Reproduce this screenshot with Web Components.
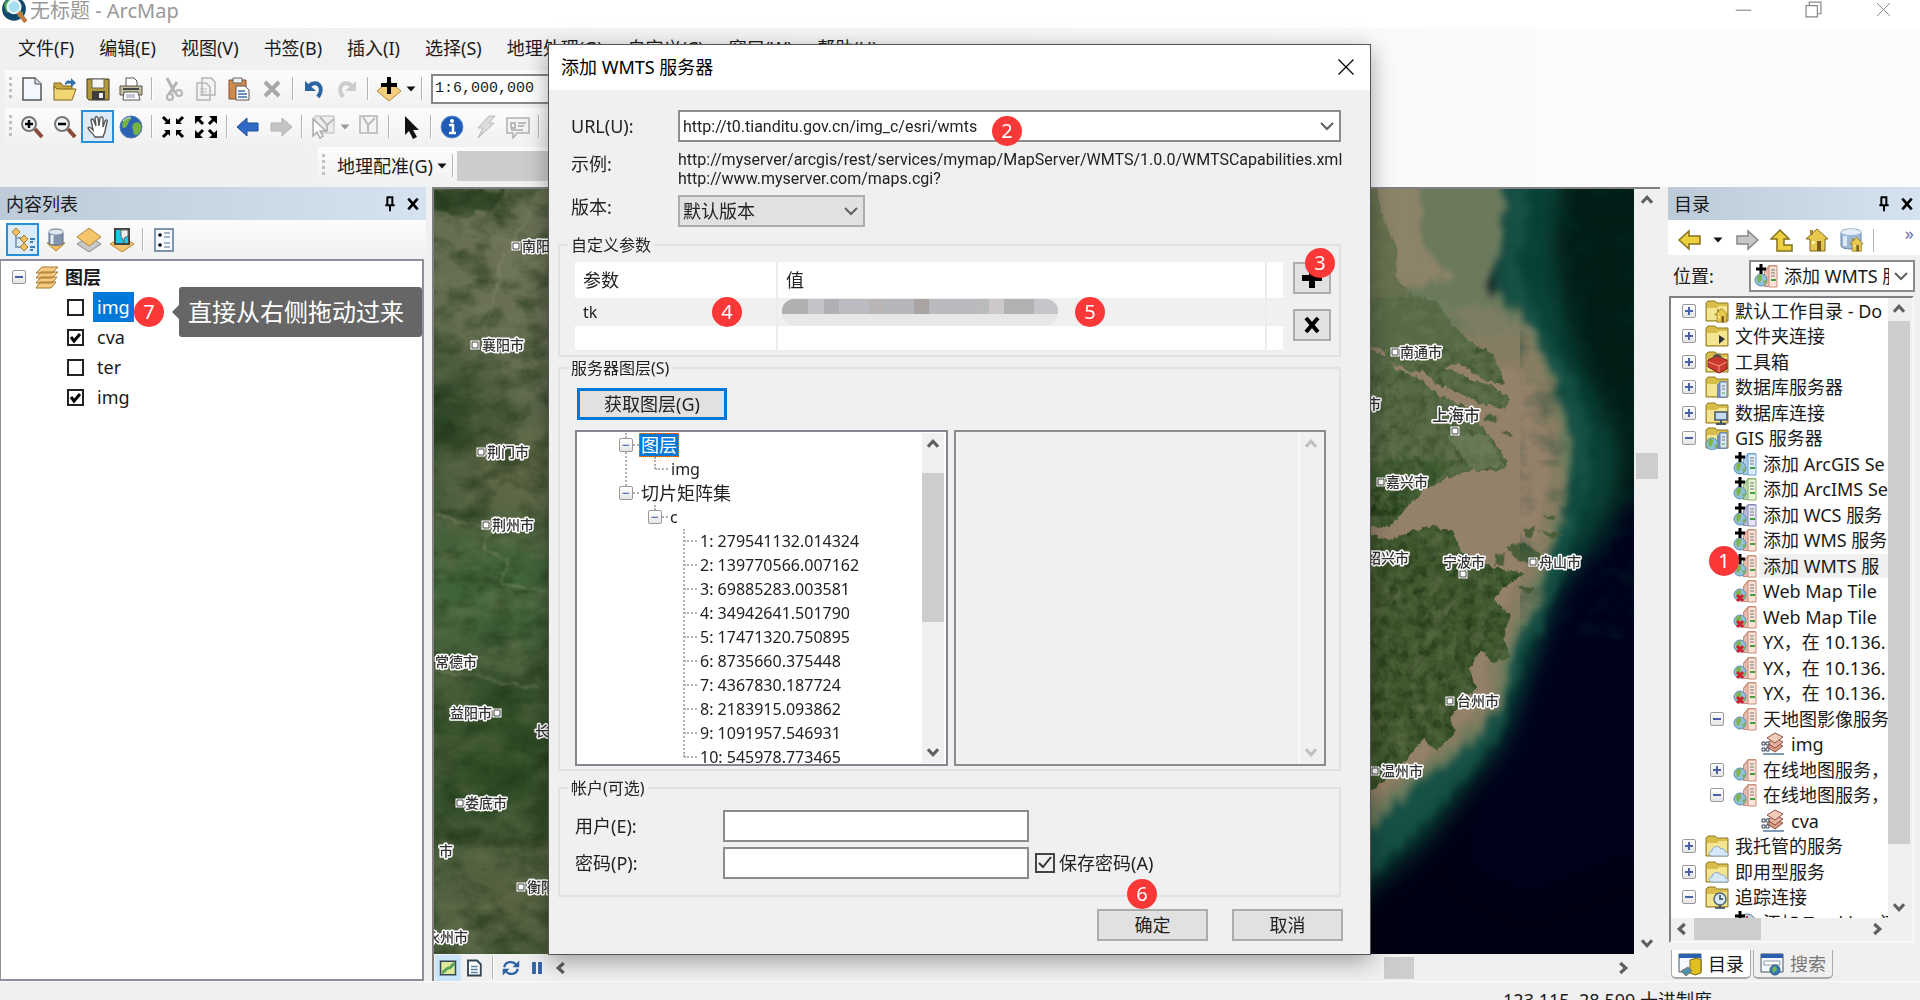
<!DOCTYPE html>
<html lang="zh-CN">
<head>
<meta charset="utf-8">
<title>无标题 - ArcMap</title>
<style>
  body {
    margin: 0;
    height: 100vh;
    overflow: hidden;
    font: 18px/24px "Noto Sans", "Noto Sans CJK SC", sans-serif;
    color: #1a1a1a;
    background: #f0f0f0;
  }
</style>
</head>
<body>
<arc-window></arc-window>

<template id="tool-bar-template">
  <style>
    :host {
      display: flex;
      align-items: center;
      box-sizing: border-box;
      height: 37px;
      background: linear-gradient(#fcfcfc, #f1f1f1);
    }
    .grip {
      flex: none;
      width: 3px;
      height: 23px;
      margin: 0 3px 0 4px;
      background: repeating-linear-gradient(#c0c0c0 0 3px, transparent 3px 6px);
    }
  </style>
  <span class="grip"></span>
  <slot></slot>
</template>

<template id="dock-panel-template">
  <style>
    :host {
      display: flex;
      flex-direction: column;
      min-width: 0;
      min-height: 0;
    }
    header {
      display: flex;
      align-items: center;
      height: 33px;
      padding: 0 2px 0 6px;
      background: linear-gradient(to right, #bdcbd9, #d5e3f1);
    }
    h2 {
      flex: 1;
      margin: 0;
      font: inherit;
    }
    button {
      display: flex;
      width: 23px;
      padding: 0;
      border: 0;
      background: none;
      justify-content: center;
    }
    arc-icon { --size: 16px; }
  </style>
  <header>
    <h2></h2>
    <button aria-label="自动隐藏"><arc-icon name="pin"></arc-icon></button>
    <button aria-label="关闭"><arc-icon name="cross"></arc-icon></button>
  </header>
  <slot></slot>
</template>

<template id="tree-row-template">
  <style>
    :host {
      display: flex;
      align-items: center;
      flex: none;
      white-space: nowrap;
    }
    .expander {
      box-sizing: border-box;
      flex: none;
      width: 14px;
      height: 14px;
      margin: 0 9px 0 11px;
      visibility: hidden;
      border: 1px solid #9a9a9a;
      border-radius: 2px;
      background:
        linear-gradient(#4a62a8, #4a62a8) center / 8px 2px no-repeat,
        linear-gradient(#fff, #e4e4e4);
    }
    :host([expand]) .expander { visibility: visible; }
    :host([expand="plus"]) .expander {
      background:
        linear-gradient(#4a62a8, #4a62a8) center / 8px 2px no-repeat,
        linear-gradient(#4a62a8, #4a62a8) center / 2px 8px no-repeat,
        linear-gradient(#fff, #e4e4e4);
    }
    arc-icon { flex: none; }
    .label { padding: 0 4px; margin-left: 2px; }
    :host([selected]) .label { background: #f0f0f0; flex: 1; }
  </style>
  <span class="expander"></span>
  <arc-icon></arc-icon>
  <span class="label"><slot></slot></span>
</template>

<template id="scroll-bar-template">
  <style>
    :host {
      display: flex;
      flex-direction: column;
      flex: none;
      width: 22px;
      background: #f0f0f0;
      color: #606060;
    }
    :host([horizontal]) {
      flex-direction: row;
      width: auto;
      height: 22px;
    }
    :host([disabled]) { color: #c0c0c0; }
    arc-icon { --size: 22px; flex: none; }
    .track { flex: 1; display: flex; flex-direction: column; min-width: 0; }
    :host([horizontal]) .track { flex-direction: row; }
    .before { flex: var(--before, 0) 0 0; }
    .thumb { flex: var(--thumb, 0) 0 0; background: #cdcdcd; }
    .after { flex: var(--after, 1) 0 0; }
  </style>
  <arc-icon class="start"></arc-icon>
  <div class="track">
    <div class="before"></div><div class="thumb"></div><div class="after"></div>
  </div>
  <arc-icon class="end"></arc-icon>
</template>

<template id="group-box-template">
  <style>
    :host { display: block; }
    fieldset {
      margin: 0;
      padding: 0;
      border: 2px solid #e2e2e2;
      min-width: 0;
    }
    legend {
      margin-left: 8px;
      padding: 0 3px;
      line-height: 22px;
    }
    .body { padding: var(--group-padding, 0); }
  </style>
  <fieldset>
    <legend></legend>
    <div class="body"><slot></slot></div>
  </fieldset>
</template>

<template id="step-badge-template">
  <style>
    :host {
      position: absolute;
      z-index: 5;
      width: 30px;
      height: 30px;
      border-radius: 50%;
      background: #fb3838;
      color: #fff;
      font-size: 20px;
      line-height: 29px;
      text-align: center;
    }
  </style>
  <slot></slot>
</template>

<template id="hint-bubble-template">
  <style>
    :host {
      position: absolute;
      z-index: 5;
      box-sizing: border-box;
      padding: 0 18px 0 9px;
      border-radius: 3px;
      background: #666;
      color: #fff;
      font-size: 24px;
      line-height: 50px;
      white-space: nowrap;
    }
    :host::before {
      content: "";
      position: absolute;
      left: -7px;
      top: 18px;
      border: 7px solid transparent;
      border-width: 7px 7px 7px 0;
      border-right-color: #666;
    }
  </style>
  <slot></slot>
</template>

<template id="map-view-template">
  <style>
    :host {
      display: block;
      position: relative;
      min-width: 0;
      min-height: 0;
      overflow: hidden;
      background: #00000f;
    }
    svg {
      position: absolute;
      right: 0;
      top: 0;
      width: 1200px;
      height: 766px;
    }
    text {
      font: 500 14px "Noto Sans CJK SC", sans-serif;
      fill: #333;
      stroke: #fff;
      stroke-width: 3px;
      stroke-linejoin: round;
      paint-order: stroke;
    }
    .halo { fill: #fff; stroke: #fff; stroke-width: 3px; }
    .city { fill: #fff; stroke: #444; stroke-width: 1px; }
  </style>
  <svg viewBox="0 0 1200 766" role="img" aria-label="影像地图">
    <defs>
      <filter id="soft" x="-20%" y="-20%" width="140%" height="140%" color-interpolation-filters="sRGB"><feGaussianBlur stdDeviation="30"/></filter>
      <filter id="soft2" x="-20%" y="-20%" width="140%" height="140%" color-interpolation-filters="sRGB">
        <feTurbulence type="fractalNoise" baseFrequency=".03" numOctaves="4" seed="4" result="n"/>
        <feDisplacementMap in="SourceGraphic" in2="n" scale="50" xChannelSelector="R" yChannelSelector="G"/>
        <feGaussianBlur stdDeviation="9"/>
      </filter>
      <filter id="mud" x="-20%" y="-20%" width="140%" height="140%" color-interpolation-filters="sRGB">
        <feTurbulence type="fractalNoise" baseFrequency=".03" numOctaves="4" seed="9" result="n"/>
        <feDisplacementMap in="SourceGraphic" in2="n" scale="40" xChannelSelector="R" yChannelSelector="G"/>
        <feGaussianBlur stdDeviation="6"/>
      </filter>
      <filter id="shore" x="-5%" y="-5%" width="110%" height="110%" color-interpolation-filters="sRGB">
        <feTurbulence type="fractalNoise" baseFrequency=".06" numOctaves="3" seed="8" result="n"/>
        <feDisplacementMap in="SourceGraphic" in2="n" scale="14" xChannelSelector="R" yChannelSelector="G"/>
        <feGaussianBlur stdDeviation="1"/>
      </filter>
      <filter id="ridges" x="0" y="0" width="100%" height="100%" color-interpolation-filters="sRGB">
        <feTurbulence type="fractalNoise" baseFrequency=".035 .05" numOctaves="5" seed="12"/>
        <feColorMatrix values="0 0 0 0 .11  0 0 0 0 .2  0 0 0 0 .08  2.2 0 0 0 -.9"/>
      </filter>
      <filter id="fields" x="0" y="0" width="100%" height="100%" color-interpolation-filters="sRGB">
        <feTurbulence type="fractalNoise" baseFrequency=".02 .035" numOctaves="5" seed="31"/>
        <feColorMatrix values="0 0 0 0 .48  0 0 0 0 .52  0 0 0 0 .38  0 2 0 0 -.85"/>
      </filter>
      <filter id="swell" x="0" y="0" width="100%" height="100%" color-interpolation-filters="sRGB">
        <feTurbulence type="fractalNoise" baseFrequency=".01 .02" numOctaves="4" seed="5"/>
        <feColorMatrix values="0 0 0 0 0  0 0 0 0 .22  0 0 0 0 .18  0 0 2 0 -.9"/>
      </filter>
      <clipPath id="land"><path d="M30 0 L50 20 70 80 110 130 105 190 160 225 235 240 275 285 350 325 400 340 435 400 380 395 300 360 200 375 150 375 100 360 60 330 30 325Z M190 375 L240 362 330 390 400 405 450 430 430 450 360 438 290 415 230 400Z M30 335 L80 345 110 372 170 385 230 420 300 440 350 470 400 510 440 550 430 570 340 570 260 585 190 610 140 640 90 680 30 680Z M30 695 L90 705 150 690 220 678 280 690 300 725 350 745 400 760 440 765 495 770 430 800 400 825 450 850 430 900 450 935 400 945 360 920 330 960 350 1000 300 1020 270 1060 290 1080 230 1120 190 1095 120 1150 30 1200Z"/></clipPath>
    </defs>

    <!-- inland plains and hills -->
    <rect width="960" height="766" fill="#475c3c"/>
    <g filter="url(#soft)">
      <path d="M-20 -20h180v240H60L-20 150Z" fill="#6a7055"/>
      <path d="M40 250h90v70H20Z" fill="#706f50"/>
      <path d="M-40 160l85 20 10 90H-40Z" fill="#1f3b1c"/>
      <path d="M-20 490h170v150H-20Z" fill="#2f4c26"/>
      <path d="M-20 350h170v100H-20Z" fill="#40653a"/>
      <path d="M10 660h130v100H10Z" fill="#586242"/>
    </g>
    <path d="M0 0h70l-10 20-30 8-30-6z" fill="#20391a" opacity=".7" filter="url(#shore)"/>
    <rect width="420" height="766" filter="url(#ridges)" opacity=".65"/>
    <rect width="420" height="766" filter="url(#fields)" opacity=".45"/>
    <path d="M93 20l-6 22-20 30-4 30-11 38 4 20M0 328l25 4 30 10-6 22 22 6v28l42 2M0 480l30 6 25 4 50 8" fill="none" stroke="#8c8f70" stroke-opacity=".6" stroke-width="1.500" filter="url(#shore)"/>

    <!-- sea and coast, drawn on a finer sheet -->
    <g transform="translate(926 -9) scale(.3333 .51)">
      <rect x="30" width="800" height="1540" fill="#000014"/>
      <g filter="url(#soft)">
        <path d="M400 -60H900V560L720 780 560 900 400 1000Z" fill="#021c16"/>
        <path d="M430 -60H620L580 140 640 330 780 520 760 640 650 760 560 900 480 1020 430 1100 200 1290 -30 1420V1100L400 900Z" fill="#0a4338"/>
        <path d="M600 800L900 560V1300L500 1400 300 1340Z" fill="#00021c"/>
      </g>
      <g filter="url(#soft2)">
        <path d="M400 -40L530 -20 470 170 560 300 650 400 680 480 690 600 620 740 590 800 540 870 460 980 430 1080 300 1190 160 1280 -20 1400V1200L400 900V0Z" fill="#1b5549" opacity=".75"/>
        <path d="M-20 -40H430L430 120 380 210 520 290 590 400 635 520 620 640 560 760 530 850 470 900 430 1020 360 1090 240 1150 130 1210 -20 1300V900L-20 100Z" fill="#6b7a5d"/>
        <path d="M20 330L240 300 500 300 590 420 610 640 540 760 490 840 430 920 400 1040 240 1130 20 1230Z" fill="#877d62"/>
      </g>
      <g filter="url(#mud)">
        <path d="M20 -40L180 -40 190 130 280 190 130 220Z" fill="#8d8369"/>
        <path d="M30 320L240 330 460 370 540 430 570 520 560 660 470 790 400 900 370 1020 220 1120 20 1220V1180L280 1050 360 900 400 780 290 740 200 690 20 720V640L300 560Z" fill="#94816a"/>
        <path d="M250 245L420 255 540 300 420 320 330 300Z" fill="#837f66" opacity=".7"/>
      </g>
      <g filter="url(#shore)">
        <g clip-path="url(#land)">
          <rect x="30" width="500" height="660" fill="#566a46"/>
          <rect x="30" y="640" width="500" height="620" fill="#40592f"/>
          <path d="M30 0h120v230H30Z" fill="#66704e"/>
          <path d="M30 550h260l-200 130H30Z" fill="#415c32"/>
          <rect x="30" y="600" width="500" height="660" filter="url(#ridges)" opacity=".8"/>
          <rect x="30" y="330" width="500" height="330" filter="url(#ridges)" opacity=".45"/>
          <rect x="30" y="0" width="500" height="1260" filter="url(#fields)" opacity=".45"/>
          <path d="M260 500L380 500 430 560 340 570Z" fill="#788566" opacity=".5"/>
        </g>
        <path d="M440 720l50-10 55 25-10 20-60-8ZM490 685l35-5-5 18-25 2ZM550 655l40 5-20 8ZM530 690l80 4-30 8ZM375 460l40 5-5 10-40-5ZM420 492l40 5-10 8ZM410 735l25-5-4 25-25 2ZM470 795l50 5-10 14Z" fill="#4c5f3c"/>
      </g>
      <rect x="480" width="350" height="900" filter="url(#swell)" opacity=".4"/>
    </g>

    <path class="halo" d="M79 54h6v6h-6zM38 153h6v6h-6zM44 260h6v6h-6zM49 333h6v6h-6zM60 521h6v6h-6zM23 611h6v6h-6zM84 695h6v6h-6zM958 160h6v6h-6zM944 290h6v6h-6zM1096 370h6v6h-6zM1013 509h6v6h-6zM938 579h6v6h-6zM1018 239h6v6h-6zM1026 382h6v6h-6z"/>
    <path class="city" d="M79 54h6v6h-6zM38 153h6v6h-6zM44 260h6v6h-6zM49 333h6v6h-6zM60 521h6v6h-6zM23 611h6v6h-6zM84 695h6v6h-6zM958 160h6v6h-6zM944 290h6v6h-6zM1096 370h6v6h-6zM1013 509h6v6h-6zM938 579h6v6h-6zM1018 239h6v6h-6zM1026 382h6v6h-6z"/>
    <text x="88" y="62">南阳市</text>
    <text x="48" y="161">襄阳市</text>
    <text x="53" y="268">荆门市</text>
    <text x="58" y="341">荆州市</text>
    <text x="1" y="478">常德市</text>
    <text x="16" y="529">益阳市</text>
    <text x="101" y="547">长沙市</text>
    <text x="31" y="619">娄底市</text>
    <text x="5" y="667">市</text>
    <text x="93" y="703">衡阳市</text>
    <text x="-8" y="753">永州市</text>
    <text x="966" y="168">南通市</text>
    <text x="933" y="220">市</text>
    <text x="998" y="232" style="font-size: 16px">上海市</text>
    <text x="952" y="298">嘉兴市</text>
    <text x="933" y="374">绍兴市</text>
    <text x="1009" y="378">宁波市</text>
    <text x="1105" y="378">舟山市</text>
    <text x="1023" y="517">台州市</text>
    <text x="947" y="587">温州市</text>
  </svg>
</template>

<template id="wmts-dialog-template">
  <style>
    :host {
      display: flex;
      flex-direction: column;
      box-sizing: border-box;
      width: 823px;
      border: 1px solid #555;
      background: #f0f0f0;
      box-shadow: 0 6px 22px rgba(0, 0, 0, .35);
      color: #222;
      font-size: 16px;
    }
    header {
      display: flex;
      align-items: center;
      justify-content: space-between;
      box-sizing: border-box;
      height: 45px;
      padding: 0 14px 2px 12px;
      background: #fff;
      color: #000;
      font-size: 18px;
      --size: 20px;
    }
    button {
      font: inherit;
      font-size: 18px;
      color: inherit;
      box-sizing: border-box;
      height: 32px;
      padding: 0;
      border: 2px solid #adadad;
      background: #e1e1e1;
    }
    header button {
      display: flex;
      align-items: center;
      border: 0;
      background: none;
    }
    label, .caption, .zh { font-size: 18px; }
    main { padding: 20px 29px 0 9px; }
    .form {
      display: grid;
      grid-template-columns: 107px minmax(0, 1fr);
      padding: 0 0 0 13px;
      align-items: center;
    }
    .field { display: flex; position: relative; }
    input, select {
      box-sizing: border-box;
      font: inherit;
      color: inherit;
      height: 32px;
      border: 2px solid #8c8c8c;
      border-radius: 0;
      background: #fff;
      appearance: none;
    }
    input { padding: 0 3px; min-width: 0; }
    .url { width: 100%; }
    .url, .sample { font-family: Roboto, "Noto Sans", sans-serif; }
    select {
      width: 187px;
      padding: 0 3px;
      font-size: 18px;
      border-color: #adadad;
      background: #e1e1e1;
    }
    .field arc-icon { --size: 24px; position: absolute; right: 2px; top: 4px; color: #606060; pointer-events: none; }
    .version { width: 187px; }
    .sample { line-height: 19px; padding: 8px 0 7px; white-space: nowrap; }
    .caption { align-self: start; padding-top: 10px; }
    label { line-height: 24px; }
    .raised { align-self: start; }
    group-box { --group-padding: 6px 8px 4px 15px; margin-top: 7px; }
    .params { display: flex; gap: 10px; }
    table {
      flex: 1;
      height: 89px;
      border-collapse: collapse;
      background: #fff;
      font-size: 18px;
      table-layout: fixed;
      line-height: 20px;
    }
    th { font-weight: normal; text-align: left; }
    th, td { padding: 0 8px; border: 1px solid #ececec; border-width: 0 0 1px 2px; }
    th:first-child, td:first-child { border-left: 0; }
    thead tr { height: 36px; }
    tbody tr { height: 25px; font-size: 16px; }
    tbody tr:first-child { background: #f0f0f0; }
    .mask {
      display: block;
      width: 276px;
      height: 26px;
      margin-left: -4px;
      border-radius: 12px;
      background:
        linear-gradient(to right, #b2b0ae 0 26px, #c3c3c8 26px 42px, #b0b0b4 42px 57px, #bcbbc2 57px 87px, #bab5b5 87px 102px, #b5b6ba 102px 132px, #a9a4a2 132px 147px, #b9b9be 147px 192px, #babbbc 192px 207px, #cdc8c9 207px 222px, #b1b1b4 222px 252px, #c5c6ca 252px) top / 100% 15px no-repeat,
        #e7e7e8;
    }
    .tools { display: flex; flex-direction: column; gap: 15px; }
    .tools button { width: 38px; display: flex; align-items: center; justify-content: center; }
    .fetch { width: 150px; margin: 9px 0 10px 2px; border: 3px solid #0078d7; display: block; }
    .layers { --group-padding: 0 13px 3px 15px; margin-top: 0; }
    .lists { display: grid; grid-template-columns: 1fr 1fr; gap: 6px; height: 336px; }
    .list {
      display: flex;
      min-width: 0;
      min-height: 0;
      border: 2px solid #828790;
      padding: 1px 2px 1px 1px;
      background: #fff;
      overflow: hidden;
    }
    .list.empty { background: #f0f0f0; justify-content: flex-end; border-color: #8c8c8c; }
    .list.empty scroll-bar { border-left: 2px solid #fafafa; }
    ul { list-style: none; margin: 0; padding: 0; position: relative; }
    .list > ul { flex: 1; min-height: 0; padding-left: 48px; }
    li { line-height: 24px; position: relative; white-space: nowrap; }
    li > ul { margin-left: 29px; }
    ul::before {
      content: "";
      position: absolute;
      left: -1px;
      top: 0;
      bottom: 12px;
      border-left: 2px dotted #b0b0b0;
    }
    .list > ul::before { left: 47px; bottom: auto; height: 60px; }
    .matrix::before { bottom: auto; height: 12px; }
    .node {
      display: flex;
      align-items: center;
      height: 24px;
    }
    .node::before {
      content: "−";
      box-sizing: border-box;
      width: 14px;
      height: 14px;
      margin-left: -7px;
      border: 1px solid #999;
      border-radius: 2px;
      background: linear-gradient(#fff, #e6e6e6);
      color: #3a5ca8;
      font-size: 14px;
      line-height: 11px;
      text-align: center;
      z-index: 1;
    }
    .node::after { content: ""; order: 1; width: 6px; border-top: 2px dotted #b0b0b0; }
    .node span { order: 2; padding: 0 2px; line-height: 24px; }
    .leaf { display: flex; align-items: center; }
    .leaf::before { content: ""; width: 13px; margin-right: 3px; border-top: 2px dotted #b0b0b0; }
    .selected { background: #0078d7; color: #fff; outline: 1px dotted #e08030; outline-offset: -1px; }
    .account { margin-top: 6px; --group-padding: 11px 0 16px 15px; }
    .login { display: grid; grid-template-columns: 148px 306px auto; row-gap: 5px; justify-content: start; align-items: center; }
    .save { display: flex; align-items: center; gap: 4px; padding-left: 6px; }
    .save input {
      width: 20px;
      height: 20px;
      margin: 0;
      padding: 0;
      border: 2px solid #444;
    }
    .save input:checked {
      background: url('data:image/svg+xml,<svg xmlns="http://www.w3.org/2000/svg" viewBox="0 0 16 16"><path d="M2 8l4 4 8-10" fill="none" stroke="%23333" stroke-width="2"/></svg>');
    }
    footer { display: flex; justify-content: flex-end; gap: 24px; padding: 12px 27px 13px; }
    footer button { width: 111px; }
    .b2 { left: 314px; top: 6px; }
    .b3 { left: 12px; top: -14px; }
    .slot { position: relative; }
    .b4 { right: 26px; top: -5px; }
    .b5 { left: 289px; top: -2px; }
    .b6 { left: 30px; top: -30px; }
  </style>
  <header>
    <span>添加 WMTS 服务器</span>
    <button aria-label="关闭"><arc-icon name="thin-cross"></arc-icon></button>
  </header>
  <main>
    <div class="form">
      <label for="url">URL(U):</label>
      <div class="field">
        <input id="url" class="url" value="http://t0.tianditu.gov.cn/img_c/esri/wmts">
        <arc-icon name="chevron-down"></arc-icon>
        <step-badge class="b2">2</step-badge>
      </div>
      <span class="caption">示例:</span>
      <div class="sample">http://myserver/arcgis/rest/services/mymap/MapServer/WMTS/1.0.0/WMTSCapabilities.xml<br>http://www.myserver.com/maps.cgi?</div>
      <label for="version" class="raised">版本:</label>
      <div class="field version">
        <select id="version"><option>默认版本</option></select>
        <arc-icon name="chevron-down"></arc-icon>
      </div>
    </div>

    <group-box legend="自定义参数" class="custom">
      <div class="params">
        <table>
          <colgroup><col style="width: 202px"><col><col style="width: 14px"></colgroup>
          <thead><tr><th>参数</th><th>值</th><th></th></tr></thead>
          <tbody>
            <tr><td><div class="slot">tk<step-badge class="b4">4</step-badge></div></td><td><div class="slot"><span class="mask"></span><step-badge class="b5">5</step-badge></div></td><td></td></tr>
            <tr><td></td><td></td><td></td></tr>
          </tbody>
        </table>
        <div class="tools">
          <div class="slot"><button aria-label="添加参数"><arc-icon name="plus"></arc-icon></button><step-badge class="b3">3</step-badge></div>
          <button aria-label="删除参数"><arc-icon name="remove-black"></arc-icon></button>
        </div>
      </div>
    </group-box>

    <group-box legend="服务器图层(S)" class="layers">
      <button class="fetch">获取图层(G)</button>
      <div class="lists">
        <div class="list">
          <ul>
            <li>
              <div class="node"><span class="zh selected">图层</span></div>
              <ul><li class="leaf">img</li></ul>
            </li>
            <li>
              <div class="node"><span class="zh">切片矩阵集</span></div>
              <ul class="matrix"><li>
                <div class="node"><span>c</span></div>
                <ul class="scales"></ul>
              </li></ul>
            </li>
          </ul>
          <scroll-bar style="--before: 18; --thumb: 150; --after: 120"></scroll-bar>
        </div>
        <div class="list empty"><scroll-bar disabled></scroll-bar></div>
      </div>
    </group-box>

    <group-box legend="帐户(可选)" class="account">
      <div class="login">
        <label for="user">用户(E):</label><input id="user"><span></span>
        <label for="pass">密码(P):</label><input id="pass" type="password">
        <label class="save"><input type="checkbox" checked>保存密码(A)</label>
      </div>
    </group-box>
  </main>
  <footer>
    <div class="slot"><button>确定</button><step-badge class="b6">6</step-badge></div>
    <button>取消</button>
  </footer>
</template>

<template id="arc-window-template">
  <style>
    :host {
      display: flex;
      flex-direction: column;
      height: 100%;
      position: relative;
    }
    button, input { font: inherit; color: inherit; }
    button { padding: 0; border: 0; background: none; }
    .title {
      display: flex;
      align-items: flex-start;
      height: 28px;
      padding-right: 2px;
      background: #fff;
      color: #999;
      font-size: 20px;
      line-height: 22px;
    }
    .title arc-icon { --size: 26px; margin: -3px 3px 0 1px; }
    .title h1 { flex: 1; margin: 0; font: inherit; }
    .title button { width: 70px; height: 20px; color: #888; }
    .title button arc-icon { --size: 17px; margin: 0; }
    .chrome { background: linear-gradient(to right, #f0f0f0 10%, #fbfbfb 80%); height: 159px; }
    nav { display: flex; gap: 25px; height: 40px; padding: 0 0 2px 18px; }
    .scale {
      box-sizing: border-box;
      width: 180px;
      height: 30px;
      margin-left: 5px;
      padding: 0 2px;
      border: 2px solid #888;
      background: #fff;
      font: 15px "Liberation Mono", monospace;
    }
    .bars { width: 1300px; }
    .bars tool-bar { margin: 0 0 1px 5px; }
    .bars tool-bar.georef { margin: 2px 0 0 318px; --size: 12px; }
    .georef button { padding: 0 3px 0 9px; }
    .ghost { width: 180px; height: 30px; background: #ccc; }
    .workspace {
      flex: 1;
      min-height: 0;
      display: grid;
      grid-template: minmax(0, 1fr) / 426px minmax(0, 1fr) 252px;
      column-gap: 6px;
    }
    .views { display: flex; align-items: center; height: 39px; padding-left: 6px; background: linear-gradient(#fcfcfc, #f0f0f0); }
    .toc {
      flex: 1;
      box-sizing: border-box;
      margin-right: 2px;
      border: 2px solid #8a8f98;
      border-left-width: 1px;
      background: #fff;
    }
    .toc .root { font-weight: bold; height: 31px; }
    .layer { display: flex; align-items: center; height: 30px; padding-left: 66px; gap: 9px; position: relative; }
    .layer label { padding: 3px 4px; line-height: 24px; }
    .layer input { appearance: none; box-sizing: border-box; width: 17px; height: 17px; margin: 0; border: 2px solid #222; background: #fff; }
    .layer input:checked {
      background: url('data:image/svg+xml,<svg xmlns="http://www.w3.org/2000/svg" viewBox="0 0 13 13"><path d="M2 6l3 4 6-7" fill="none" stroke="%23000" stroke-width="3"/></svg>');
    }
    .layer .active { background: #0078d7; color: #fff; }
    .map {
      display: grid;
      grid-template: minmax(0, 1fr) 27px / minmax(0, 1fr) 26px;
      border-left: 2px solid #808080;
      border-top: 2px solid #808080;
      box-sizing: border-box;
      margin-right: 2px;
    }
    .map > scroll-bar { margin-left: 2px; }
    .foot { grid-column: 1 / 3; display: flex; align-items: center; background: #f0f0f0; padding: 0 26px 0 1px; }
    .foot scroll-bar { flex: 1; }
    .foot .sep { margin: 0 5px; }
    .view { width: 26px; height: 26px; display: flex; align-items: center; justify-content: center; --size: 18px; }
    .view.on { background: #cce4f7; }
    .catalog .nav { display: flex; align-items: center; box-sizing: border-box; height: 35px; background: #fff; padding: 5px 6px 0 5px; gap: 2px; }
    .nav .sep { margin: 0 3px; }
    .nav [narrow] { margin: 0 4px; }
    .nav .more { margin-left: auto; color: #6a6ab4; align-self: flex-start; line-height: 16px; }
    .location { display: flex; align-items: center; height: 41px; padding: 0 5px 0 5px; justify-content: space-between; }
    .combo {
      display: flex;
      align-items: center;
      width: 166px;
      height: 32px;
      box-sizing: border-box;
      border: 2px solid #8c8c8c;
      background: #fff;
      padding: 0 0 0 3px;
      text-align: left;
    }
    .combo span { flex: 1; overflow: hidden; white-space: nowrap; margin: 0 0 0 6px; }
    .tree {
      flex: 1;
      min-height: 0;
      margin: 0 6px 0 1px;
      border: 2px solid #808080;
      border-color: #808080 #f8f8f8 #f8f8f8 #808080;
      display: grid;
      grid-template: minmax(0, 1fr) 23px / minmax(0, 1fr) 24px;
    }
    .tree scroll-bar[horizontal] { grid-column: 1 / 3; padding-right: 24px; }
    .rows { background: #fff; overflow: hidden; display: flex; flex-direction: column; position: relative; }
    .rows tree-row { height: 25px; }
    .rows tree-row:nth-of-type(even) { height: 26px; }
    .tabs { display: flex; gap: 2px; box-sizing: border-box; padding: 7px 0 2px 3px; height: 38px; }
    .tabs button {
      display: flex;
      align-items: center;
      gap: 6px;
      padding: 0 6px;
      border: 1px solid #aaa;
      border-top: 0;
      border-bottom-width: 2px;
      border-radius: 0 0 5px 5px;
      color: #777;
    }
    .tabs .on { background: #fff; color: #1a1a1a; }
    .status {
      height: 11px;
      padding: 7px 208px 0 0;
      overflow: hidden;
      border-top: 1px solid #fafafa;
      text-align: right;
      white-space: pre;
      line-height: 22px;
    }
    .sep { flex: none; width: 1px; height: 23px; background: #b4b4b4; margin: 0 4px; box-shadow: 1px 0 #fff; }
    tool-button { flex: none; }
    wmts-dialog { position: absolute; left: 548px; top: 44px; z-index: 3; }
    .b7 { left: 133px; top: 5px; }
    hint-bubble { left: 178px; top: -5px; }
    .b1 { left: 38px; top: 248px; }
  </style>
  <header class="title">
    <arc-icon name="app"></arc-icon>
    <h1>无标题 - ArcMap</h1>
    <button aria-label="最小化"><arc-icon name="minimize"></arc-icon></button>
    <button aria-label="还原"><arc-icon name="restore"></arc-icon></button>
    <button aria-label="关闭"><arc-icon name="thin-cross"></arc-icon></button>
  </header>
  <div class="chrome">
    <nav></nav>
    <div class="bars">
      <tool-bar id="standard"></tool-bar>
      <tool-bar id="tools"></tool-bar>
      <tool-bar class="georef">
        <button>地理配准(G)</button><arc-icon name="caret"></arc-icon>
        <i class="sep"></i><span class="ghost"></span>
      </tool-bar>
    </div>
  </div>
  <div class="workspace">
    <dock-panel heading="内容列表">
      <div class="views">
        <tool-button name="by-order" label="按绘制顺序列出" pressed></tool-button>
        <tool-button name="by-source" label="按源列出"></tool-button>
        <tool-button name="by-visible" label="按可见性列出"></tool-button>
        <tool-button name="by-select" label="按选择列出"></tool-button>
        <i class="sep"></i>
        <tool-button name="options" label="选项"></tool-button>
      </div>
      <div class="toc">
        <tree-row class="root" expand="minus" icon="layers">图层</tree-row>
        <div class="layer"><input type="checkbox" id="l1"><label for="l1" class="active">img</label>
          <step-badge class="b7">7</step-badge>
          <hint-bubble>直接从右侧拖动过来</hint-bubble>
        </div>
        <div class="layer"><input type="checkbox" id="l2" checked><label for="l2">cva</label></div>
        <div class="layer"><input type="checkbox" id="l3"><label for="l3">ter</label></div>
        <div class="layer"><input type="checkbox" id="l4" checked><label for="l4">img</label></div>
      </div>
    </dock-panel>
    <div class="map">
      <map-view></map-view>
      <scroll-bar style="--before: 242; --thumb: 26; --after: 454"></scroll-bar>
      <div class="foot">
        <button class="view on" aria-label="数据视图"><arc-icon name="data-view"></arc-icon></button>
        <button class="view" aria-label="布局视图"><arc-icon name="page-view"></arc-icon></button>
        <i class="sep"></i>
        <button class="view" aria-label="刷新"><arc-icon name="refresh"></arc-icon></button>
        <button class="view" aria-label="暂停"><arc-icon name="pause"></arc-icon></button>
        <scroll-bar horizontal style="--before: 810; --thumb: 30; --after: 197"></scroll-bar>
      </div>
    </div>
    <dock-panel heading="目录" class="catalog">
      <div class="nav">
        <tool-button name="back-gold" label="后退"></tool-button>
        <tool-button name="caret" label="历史" narrow></tool-button>
        <tool-button name="next-grey" label="前进"></tool-button>
        <tool-button name="up-gold" label="上一级"></tool-button>
        <tool-button name="home" label="主目录"></tool-button>
        <tool-button name="default-db" label="默认地理数据库"></tool-button>
        <i class="sep"></i><span class="more">»</span>
      </div>
      <div class="location">
        <span id="loc">位置:</span>
        <button class="combo" aria-labelledby="loc"><arc-icon name="add-rose"></arc-icon><span>添加 WMTS 服</span><arc-icon name="chevron-down"></arc-icon></button>
      </div>
      <div class="tree">
        <div class="rows"></div>
        <scroll-bar style="--before: 1; --thumb: 523; --after: 52"></scroll-bar>
        <scroll-bar horizontal style="--before: 1; --thumb: 67; --after: 104"></scroll-bar>
      </div>
      <div class="tabs">
        <button class="on"><arc-icon name="tab-catalog"></arc-icon>目录</button>
        <button><arc-icon name="tab-search"></arc-icon>搜索</button>
      </div>
    </dock-panel>
  </div>
  <div class="status">123.115  28.599 十进制度</div>
  <wmts-dialog></wmts-dialog>
</template>

<script>
  (function () {
    const GLASS = '<circle cx="9" cy="9" r="7" fill="#eef2f4" stroke="#777" stroke-width="2"/><path d="M15 14l7 8" stroke="#8a4a3c" stroke-width="4"/>';
    const FOLDER = '<path d="M1 4l2-2h7l2 2h11v18H1z" fill="#d9bd4a" stroke="#8f7a22"/><path d="M2 9h10l2-2h8v14H2z" fill="#f3e592"/>';
    const GLOBE = '<circle cx="7" cy="16" r="6" fill="#8fc0dc" stroke="#5b8db0"/><path d="M3 13c3-4 6-2 5 1s-2 5-4 5zM9 17l4-1-2 5z" fill="#7fb34e"/>';
    const CROSSED = '<path d="M4 16l6 6M10 16l-6 6" stroke="#d0202c" stroke-width="3"/>';
    const PLUS = '<path d="M7 0v10M2 5h10" stroke="#000" stroke-width="3"/>';
    const server = (edge, fill) => `<path d="M10 7l5-6h8v22H10z" fill="${edge}"/><path d="M11 8l4-5v19h-4z" fill="${fill}" opacity=".55"/><path d="M15 2h8v21h-8z" fill="${fill}" stroke="${edge}"/><path d="M17 6h4M17 9h4M17 12h4" stroke="#777"/><path d="M17 16h5" stroke="#3fa03f" stroke-width="2"/>`;
    const ROSE = server("#c98d7c", "#fbe3d8");
    const HOUSE = '<path d="M12 1l11 10h-3v12H5V11H1z" fill="#e5c84c" stroke="#7d671c"/><path d="M5 2h3v5H5z" fill="#a5823a"/><path d="M12 13h4v10h-4z" fill="#7a5a1a"/><path d="M7 13h3v3H7z" fill="#fff4b0"/>';
    const SMALL_HOUSE = '<g transform="translate(9 9) scale(.62)">' + HOUSE + "</g>";
    const MINI_SERVER = '<path d="M12 10l3-4h7v17H12z" fill="#6f8db0"/><path d="M15 7h7v15h-7z" fill="#dbe9f6" stroke="#7088a6"/><path d="M17 11h3M17 14h3" stroke="#667"/><path d="M17 18h3" stroke="#3a3"/>';
    const MAPLAYER = '<path d="M6 15l8-5 8 4-8 6z" fill="#d8957f" stroke="#8d5546"/><path d="M6 11l8-5 8 4-8 6z" fill="#e6b09c" stroke="#8d5546"/><path d="M6 6l8-5 8 4-8 6z" fill="#f4cbb9" stroke="#8d5546"/><path d="M1 10h3v3H1zM5 10h3v3H5zM1 16h3v3H1zM5 16h3v3H5z" fill="#fff" stroke="#345"/><path d="M2 22h21" stroke="#7f9ab4" stroke-width="2"/>';
    const CLOUD = '<path d="M7 22c-4 0-4-5 0-5 0-5 7-6 9-2 4-1 5 2 4 3 4 0 4 4 1 4z" fill="#d6e8f8" stroke="#88a8c8"/>';

    // all drawn on a 24 x 24 grid
    const ICONS = {
      app: '<circle cx="12" cy="11" r="11" fill="#12486e"/><path d="M3 6c4-5 9-5 8-1s-5 4-4 8-4 1-4-7zM15 14c5-2 6 0 5 3s-5 3-5-3z" fill="#4ea64b"/><circle cx="12" cy="9" r="6" fill="#a8dff0" stroke="#e8f6fa" stroke-width="2"/><path d="M16 14l7 9" stroke="#c07a3c" stroke-width="4"/>',
      minimize: '<path d="M1 13h22" stroke="#888" stroke-width="1.600"/>',
      restore: '<path d="M1.500 6.500h16v16h-16zM6 6V1.500h16.500V18H18" fill="none" stroke="#888" stroke-width="1.700"/>',
      "thin-cross": '<path d="M3 3l18 18M21 3L3 21" stroke="currentColor" stroke-width="1.400"/>',
      cross: '<path d="M5 4l14 16M19 4L5 20" stroke="#000" stroke-width="4"/>',
      "remove-black": '<path d="M6 5l12 14M18 5L6 19" stroke="#000" stroke-width="4"/>',
      plus: '<path d="M12 3v19M2 12h20" stroke="#000" stroke-width="6"/>',
      pin: '<path d="M5 14h14M7 2h10M8 2v12M15.500 2v12M12 14v9" stroke="#000" stroke-width="3"/>',
      caret: '<path d="M3 7h18l-9 10z" fill="#111"/>',
      "caret-grey": '<path d="M3 7h18l-9 10z" fill="#999"/>',
      "chevron-down": '<path d="M6 9l6 6 6-6" fill="none" stroke="#606060" stroke-width="2"/>',
      "arrow-up": '<path d="M6.500 15l5.500-6 5.500 6" fill="none" stroke="currentColor" stroke-width="3.500"/>',
      "arrow-down": '<path d="M6.500 9l5.500 6 5.500-6" fill="none" stroke="currentColor" stroke-width="3.500"/>',
      "arrow-left": '<path d="M15 6.500L9 12l6 5.500" fill="none" stroke="currentColor" stroke-width="3.500"/>',
      "arrow-right": '<path d="M9 6.500l6 5.500-6 5.500" fill="none" stroke="currentColor" stroke-width="3.500"/>',
      new: '<path d="M3 1h12l6 6v16H3z" fill="#f2f8fd" stroke="#555" stroke-width="1.500"/><path d="M15 1v6h6" fill="#cfdbe6" stroke="#555"/>',
      open: '<path d="M1 6h7l2 3h9v4H1z" fill="#c9a93e" stroke="#7d671c"/><path d="M1 23V9l3 3h19l-4 11z" fill="#f1d673" stroke="#7d671c"/><path d="M12 8c0-5 4-5 6-4V1l5 5-5 4V7c-3-1-4 0-6 1z" fill="#2f6fae"/>',
      save: '<path d="M1 2h22v21H3l-2-2z" fill="#b0993a" stroke="#3d3820"/><path d="M6 2h12v9H6z" fill="#f5f5f0" stroke="#666"/><path d="M6 14h13v9H6z" fill="#3c3c3c"/><path d="M13 16h4v5h-4z" fill="#eee"/>',
      print: '<path d="M7 9V1h8l3 3v5" fill="#fff" stroke="#555"/><path d="M1 9h22v9H1z" fill="#c4bd9a" stroke="#555"/><path d="M4 12h16" stroke="#444" stroke-width="2"/><path d="M5 15h14l2 8H4z" fill="#fff" stroke="#555"/><path d="M7 18h9M7 20h9" stroke="#88a"/>',
      cut: '<path d="M6 1l8 15M16 5L8 17" stroke="#b5b5b5" stroke-width="3"/><circle cx="9" cy="20" r="3" fill="none" stroke="#b5b5b5" stroke-width="2"/><circle cx="18" cy="16" r="3" fill="none" stroke="#b5b5b5" stroke-width="2"/>',
      copy: '<path d="M8 1h9l4 4v13H8zM3 6h9l4 4v13H3z" fill="#f4f4f4" stroke="#b5b5b5" stroke-width="1.500"/><path d="M6 12h7M6 15h7M6 18h7" stroke="#b5b5b5"/>',
      paste: '<path d="M2 3h17v19H2z" fill="#d08a4a" stroke="#84502a"/><path d="M6 1h9v5H6z" fill="#eee" stroke="#666"/><path d="M9 9h9l4 4v10H9z" fill="#fff" stroke="#555"/><path d="M11 14h7M11 17h9M11 20h9" stroke="#3a6ea5" stroke-width="1.500"/>',
      remove: '<path d="M5 5l14 14M19 5L5 19" stroke="#a8a8a8" stroke-width="4"/>',
      undo: '<path d="M7 9c8-7 16 1 9 11" fill="none" stroke="#2c65a5" stroke-width="4"/><path d="M3 4v10h11z" fill="#2c65a5"/>',
      redo: '<path d="M17 9c-8-7-16 1-9 11" fill="none" stroke="#ccc" stroke-width="4"/><path d="M21 4v10H10z" fill="#ccc"/>',
      add: '<path d="M12 4l12 10-12 10L0 14z" fill="#f5cd7c" stroke="#b98a35"/><path d="M12 0v17M4 8h16" stroke="#000" stroke-width="4"/>',
      "zoom-in": GLASS + '<path d="M9 5v8M5 9h8" stroke="#000" stroke-width="2.500"/>',
      "zoom-out": GLASS + '<path d="M5 9h8" stroke="#000" stroke-width="2.500"/>',
      hand: '<path d="M9 22c-2-4-6-6-7-9 1-2 3 0 5 2L5 5c1-2 2-1 3 1l2 5-1-8c1-2 2-2 3 0l1 8 1-8c1-2 3-1 3 1v8l2-6c1-2 3-1 2 1l-2 9c0 3-2 4-2 6z" fill="#fff" stroke="#555" stroke-width="1.400"/>',
      globe: '<circle cx="12" cy="12" r="11" fill="#2b62b4" stroke="#5a7fae"/><path d="M4 6c4-5 10-5 7-1s-1 4-4 7-5-1-3-6zM14 9c6-4 9 0 8 5s-6 8-7 5 0-4-2-6z" fill="#76b341"/><path d="M4 6c4-4 9-4 7-2" stroke="#dbeaff" fill="none"/>',
      shrink: '<path d="M9 9V3L3 9zM15 9V3l6 6zM9 15v6l-6-6zM15 15v6l6-6z" fill="#000"/><path d="M2 2l5 5M22 2l-5 5M2 22l5-5M22 22l-5-5" stroke="#000" stroke-width="3"/>',
      expand: '<path d="M1 1h8L1 9zM23 1h-8l8 8zM1 23h8l-8-8zM23 23h-8l8-8z" fill="#000"/><path d="M3 3l6 6M21 3l-6 6M3 21l6-6M21 21l-6-6" stroke="#000" stroke-width="3"/>',
      back: '<path d="M1 12L11 3v5h11v8H11v5z" fill="#2f6bc4" stroke="#1e4c9a"/>',
      next: '<path d="M23 12L13 3v5H2v8h11v5z" fill="#c4c4c4" stroke="#b4b4b4"/>',
      "select-feature": '<path d="M4 1h19v17H4z" fill="#eee" stroke="#b8b8b8"/><path d="M9 2l7 8 7-6M16 10v7" stroke="#bbb" fill="none" stroke-width="2"/><path d="M2 4v17l4-4 3 6 3-2-3-5h6z" fill="#fff" stroke="#aaa" stroke-width="1.500"/>',
      clear: '<path d="M4 1h17v17H4z" fill="#f4f4f4" stroke="#b4b4b4" stroke-width="1.500"/><path d="M7 2l5 8 7-7M12 10v7" stroke="#bbb" fill="none" stroke-width="2"/>',
      pointer: '<path d="M7 1v19l4-4 4 8 4-2-4-7h6z" fill="#111"/>',
      info: '<circle cx="12" cy="12" r="11" fill="#1f5cb8" stroke="#5f8fd0"/><path d="M9 10h4v8M9 18h7" stroke="#fff" stroke-width="2.500" fill="none"/><circle cx="12" cy="6" r="2" fill="#fff"/>',
      bolt: '<path d="M16 1h6l-6 7h5L5 23l5-10H5z" fill="#ddd" stroke="#b5b5b5"/>',
      popup: '<path d="M1 3h22v15H11l-4 5v-5H1z" fill="#f4f4f4" stroke="#b0b0b0" stroke-width="1.500"/><path d="M5 8h4v5H5zM12 8h8M12 11h6M5 15h12" fill="none" stroke="#a8a8a8" stroke-width="1.500"/>',
      "by-order": '<path d="M5 5v14h6M5 10h6" stroke="#8aa2ba" stroke-width="2" fill="none"/><path d="M5 0l4 4-4 4-4-4zM13 7l4 4-4 4-4-4zM13 15l4 4-4 4-4-4z" fill="#f0bf62" stroke="#a87c2c"/><path d="M19 11h5M19 14h3M19 19h5M19 22h3" stroke="#3a7fae" stroke-width="2"/>',
      "by-source": '<path d="M3 15l9 8 9-8z" fill="#f0bf62" stroke="#a87c2c"/><path d="M5 4c0-4 14-4 14 0v11c0 3-14 3-14 0z" fill="#8195ae" stroke="#5b6b80"/><ellipse cx="12" cy="4" rx="7" ry="2.500" fill="#dfe7f0"/><path d="M8 7v9" stroke="#e6edf5" stroke-width="3"/>',
      "by-visible": '<path d="M12 8l12 8-12 8L0 16z" fill="#c8c8c8" stroke="#888"/><path d="M12 0l12 9-12 9L0 9z" fill="#f5c56c" stroke="#b0883c"/>',
      "by-select": '<path d="M12 9l12 7-12 8L0 16z" fill="#f5c56c" stroke="#b0883c"/><path d="M5 1h14v15H5z" fill="#17c8e8" stroke="#444" stroke-width="2"/><path d="M11 2h7v6l-4 2v5l-3-7z" fill="#eee" stroke="#666"/>',
      options: '<path d="M3 1h18v22H3z" fill="#f7faff" stroke="#5a7596" stroke-width="1.500"/><circle cx="8" cy="7" r="1.800"/><circle cx="8" cy="17" r="1.800"/><path d="M12 5h6M12 9h6M12 15h6M12 19h6" stroke="#8a9cc0" stroke-width="1.500"/>',
      layers: '<path d="M5 17h16l-5 6H1zM6 12h16l-5 6H1zM6 7h17l-6 6H1zM7 2h16l-6 6H1z" fill="#f4cb82" stroke="#a9772c"/>',
      "data-view": '<path d="M2 3h20v18H2z" fill="#dcea9a" stroke="#345" stroke-width="2"/><path d="M4 18c4-1 5-6 9-6s4-5 8-6" stroke="#5aa35a" stroke-width="4" fill="none"/>',
      "page-view": '<path d="M4 2h12l5 5v15H4z" fill="#fff" stroke="#345" stroke-width="2.500"/><path d="M8 10h9M8 14h9M8 18h9" stroke="#5b7f9f" stroke-width="2"/>',
      refresh: '<path d="M3 11c1-8 12-9 16-3M21 13c-1 8-12 9-16 3" fill="none" stroke="#2d62a4" stroke-width="3"/><path d="M23 2v9h-9zM1 22v-9h9z" fill="#2d62a4"/>',
      pause: '<path d="M8 4v16M16 4v16" stroke="#2d62a4" stroke-width="5"/>',
      "back-gold": '<path d="M1 12l10-9v5h11v8H11v5z" fill="#ecd040" stroke="#85701a" stroke-width="1.500"/>',
      "next-grey": '<path d="M23 12L13 3v5H2v8h11v5z" fill="#c6c6c6" stroke="#888" stroke-width="1.500"/>',
      "up-gold": '<path d="M10 2l9 9h-5v6h8v6H7V11H1z" fill="#ecd040" stroke="#85701a" stroke-width="1.500"/>',
      home: HOUSE,
      "default-db": '<path d="M1 4c0-4 20-4 20 0v14c0 4-20 4-20 0z" fill="#9db9d4" stroke="#6a87a6"/><ellipse cx="11" cy="4" rx="10" ry="3" fill="#e4eef8"/><path d="M5 8v10" stroke="#dce9f5" stroke-width="4"/>' + SMALL_HOUSE,
      "folder-home": FOLDER + SMALL_HOUSE,
      "folder-link": FOLDER + '<path d="M14 11l6 4-6 5z" fill="#333"/>',
      toolbox: FOLDER + '<path d="M3 10l9-4 10 4v9l-8 4-11-6z" fill="#cc3a30" stroke="#7d1a16"/><path d="M3 12l11 4 8-4M14 16v6" stroke="#f09a8c" fill="none"/><path d="M9 8c0-4 6-4 7 0" stroke="#555" fill="none" stroke-width="2"/>',
      "folder-server": FOLDER + MINI_SERVER,
      "folder-db": FOLDER + '<path d="M10 11h12v8H10z" fill="#c4dcf0" stroke="#456" stroke-width="1.500"/><path d="M16 19v3M11 23h10" stroke="#456" stroke-width="2"/>',
      "folder-gis": FOLDER + MINI_SERVER + '<g transform="translate(0 2)">' + GLOBE + "</g>",
      "folder-cloud": FOLDER + CLOUD,
      "folder-clock": FOLDER + '<circle cx="15" cy="14" r="6" fill="#d8e8f5" stroke="#567" stroke-width="1.500"/><path d="M15 10v4h3M15 20v3M10 23h10" stroke="#345" stroke-width="1.500" fill="none"/>',
      "add-blue": server("#6fa3d4", "#dceefc") + GLOBE + PLUS,
      "add-green": server("#8cb070", "#e8f4d8") + GLOBE + PLUS,
      "add-violet": server("#8888b4", "#e6e6f6") + GLOBE + PLUS,
      "add-rose": ROSE + GLOBE + PLUS,
      "rose-off": ROSE + GLOBE + CROSSED,
      rose: ROSE + GLOBE,
      maplayer: MAPLAYER,
      "add-track": '<circle cx="14" cy="12" r="9" fill="#b9d8ee" stroke="#678"/><path d="M14 5v8" stroke="#c33" stroke-width="2"/>' + PLUS,
      "tab-catalog": '<path d="M1 2h22v18H1z" fill="#f4f8fc" stroke="#456"/><path d="M1 2h22v4H1z" fill="#2c5fae"/><path d="M12 8l7-2 4 2v13l-6 2-5-2z" fill="#e0c020" stroke="#806a10"/><path d="M3 19l7-4 4 4-6 5z" fill="#4d93a8" stroke="#876"/>',
      "tab-search": '<path d="M1 2h22v18H1z" fill="#f4f8fc" stroke="#456"/><path d="M1 2h22v4H1z" fill="#2c5fae"/><path d="M4 9h16v4H4z" fill="#fff" stroke="#89a"/><circle cx="15" cy="18" r="5" fill="#3377b8" stroke="#357"/><path d="M12 16l4-2 1 4-4 3z" fill="#7ab648"/>',
    };

    const stamp = (host, id) => {
      const root = host.attachShadow({ mode: "open" });
      root.appendChild(document.getElementById(id).content.cloneNode(true));
      return root;
    };

    customElements.define("arc-icon", class extends HTMLElement {
      static get observedAttributes() {
        return ["name"];
      }
      constructor() {
        super();
        this.attachShadow({ mode: "open" });
      }
      attributeChangedCallback() {
        this.shadowRoot.innerHTML = `
          <style>
            :host { display: inline-flex; width: var(--size, 24px); height: var(--size, 24px); }
            svg { width: 100%; height: 100%; }
          </style>
          <svg viewBox="0 0 24 24" aria-hidden="true">${ICONS[this.getAttribute("name")] || ""}</svg>`;
      }
    });

    customElements.define("tool-button", class extends HTMLElement {
      connectedCallback() {
        this.attachShadow({ mode: "open" }).innerHTML = `
          <style>
            :host { display: flex; width: 33px; height: 33px; }
            :host([narrow]) { width: 12px; --size: 12px; }
            button {
              display: flex; flex: 1; align-items: center; justify-content: center;
              padding: 0; border: 2px solid transparent; background: none;
            }
            :host([narrow]) button { border-width: 0; }
            :host([pressed]) button { border-color: #2a8dd8; background: #dcebf8; }
          </style>
          <button aria-label="${this.getAttribute("label")}"><arc-icon name="${this.getAttribute("name")}"></arc-icon></button>`;
      }
    });

    for (const name of ["tool-bar", "step-badge", "hint-bubble", "map-view"]) {
      customElements.define(name, class extends HTMLElement {
        connectedCallback() {
          stamp(this, name + "-template");
        }
      });
    }

    customElements.define("dock-panel", class extends HTMLElement {
      connectedCallback() {
        stamp(this, "dock-panel-template").querySelector("h2").textContent = this.getAttribute("heading");
      }
    });

    customElements.define("group-box", class extends HTMLElement {
      connectedCallback() {
        stamp(this, "group-box-template").querySelector("legend").textContent = this.getAttribute("legend");
      }
    });

    customElements.define("tree-row", class extends HTMLElement {
      connectedCallback() {
        const root = stamp(this, "tree-row-template");
        root.querySelector("arc-icon").setAttribute("name", this.getAttribute("icon"));
        this.style.paddingLeft = 28 * (this.getAttribute("level") || 0) + "px";
      }
    });

    customElements.define("scroll-bar", class extends HTMLElement {
      connectedCallback() {
        const root = stamp(this, "scroll-bar-template");
        const flat = this.hasAttribute("horizontal");
        root.querySelector(".start").setAttribute("name", flat ? "arrow-left" : "arrow-up");
        root.querySelector(".end").setAttribute("name", flat ? "arrow-right" : "arrow-down");
      }
    });

    const SCALES = [
      "279541132.014324", "139770566.007162", "69885283.003581", "34942641.501790", "17471320.750895",
      "8735660.375448", "4367830.187724", "2183915.093862", "1091957.546931", "545978.773465",
    ];

    customElements.define("wmts-dialog", class extends HTMLElement {
      connectedCallback() {
        const root = stamp(this, "wmts-dialog-template");
        root.querySelector(".scales").innerHTML =
          SCALES.map((s, i) => `<li class="leaf">${i + 1}: ${s}</li>`).join("");
      }
    });

    const MENUS = ["文件(F)", "编辑(E)", "视图(V)", "书签(B)", "插入(I)", "选择(S)", "地理处理(G)", "自定义(C)", "窗口(W)", "帮助(H)"];

    const STANDARD = ["new:新建", "open:打开", "save:保存", "print:打印", "|", "cut:剪切", "copy:复制", "paste:粘贴", "remove:删除", "|", "undo:撤消", "redo:恢复", "|", "add:添加数据", "caret:更多", "|"];
    const TOOLS = ["zoom-in:放大", "zoom-out:缩小", "hand:平移", "globe:全图", "|", "shrink:固定比例放大", "expand:固定比例缩小", "|", "back:上一视图", "next:下一视图", "|", "select-feature:选择要素", "caret-grey:更多", "clear:清除选择", "|", "pointer:选择元素", "|", "info:识别", "bolt:超链接", "popup:HTML 弹出窗口", "|"];

    // level, expander, icon, label
    const CATALOG = [
      [0, "plus", "folder-home", "默认工作目录 - Do"],
      [0, "plus", "folder-link", "文件夹连接"],
      [0, "plus", "toolbox", "工具箱"],
      [0, "plus", "folder-server", "数据库服务器"],
      [0, "plus", "folder-db", "数据库连接"],
      [0, "minus", "folder-gis", "GIS 服务器"],
      [1, "", "add-blue", "添加 ArcGIS Se"],
      [1, "", "add-green", "添加 ArcIMS Se"],
      [1, "", "add-violet", "添加 WCS 服务"],
      [1, "", "add-rose", "添加 WMS 服务"],
      [1, "", "add-rose", "添加 WMTS 服"],
      [1, "", "rose-off", "Web Map Tile"],
      [1, "", "rose-off", "Web Map Tile"],
      [1, "", "rose-off", "YX，在 10.136."],
      [1, "", "rose-off", "YX，在 10.136."],
      [1, "", "rose-off", "YX，在 10.136."],
      [1, "minus", "rose", "天地图影像服务"],
      [2, "", "maplayer", "img"],
      [1, "plus", "rose", "在线地图服务，"],
      [1, "minus", "rose", "在线地图服务，"],
      [2, "", "maplayer", "cva"],
      [0, "plus", "folder-cloud", "我托管的服务"],
      [0, "plus", "folder-cloud", "即用型服务"],
      [0, "minus", "folder-clock", "追踪连接"],
      [1, "", "add-track", "添加 Tracking 连接"],
    ];

    const toolbar = (items) => items.map((item) => {
      if (item === "|") return '<i class="sep"></i>';
      const [name, label] = item.split(":");
      const flags = (name.startsWith("caret") ? " narrow" : "") + (name === "hand" ? " pressed" : "");
      return `<tool-button name="${name}" label="${label}"${flags}></tool-button>`;
    }).join("");

    customElements.define("arc-window", class extends HTMLElement {
      connectedCallback() {
        const root = stamp(this, "arc-window-template");
        root.querySelector("nav").innerHTML = MENUS.map((m) => `<button>${m}</button>`).join("");
        root.querySelector("#standard").innerHTML =
          toolbar(STANDARD) + '<input class="scale" aria-label="比例" value="1:6,000,000">';
        root.querySelector("#tools").innerHTML = toolbar(TOOLS);
        root.querySelector(".rows").innerHTML = CATALOG.map(([level, expand, icon, label], i) =>
          `<tree-row level="${level}" icon="${icon}"${expand && ` expand="${expand}"`}${i === 10 ? " selected" : ""}>${label}</tree-row>`
        ).join("") + '<step-badge class="b1">1</step-badge>';
      }
    });
  })();
</script>
</body>
</html>
